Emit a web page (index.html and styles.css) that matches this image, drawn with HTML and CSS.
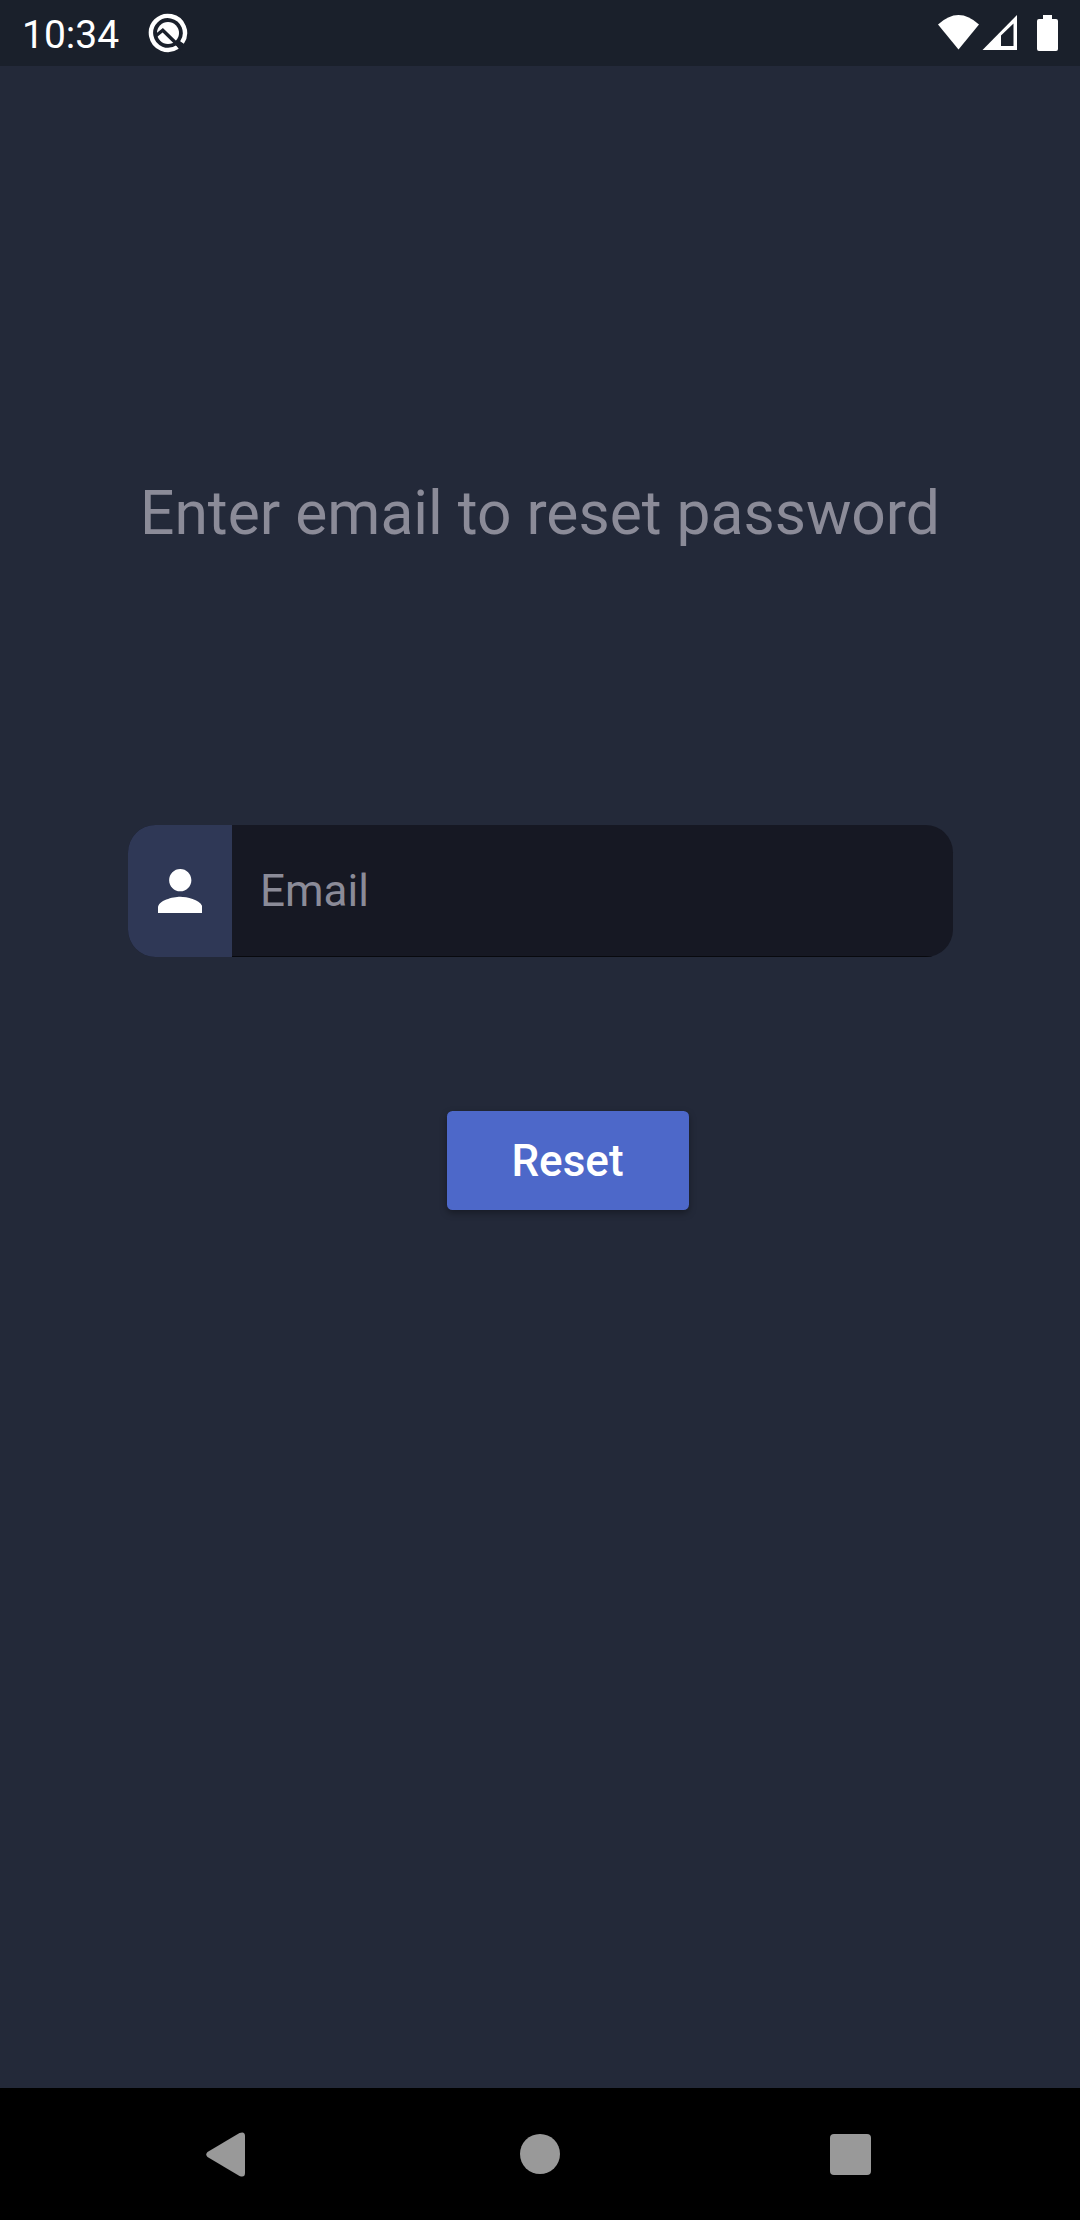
FILE: index.html
```html
<!DOCTYPE html>
<html lang="en">
<head>
<meta charset="utf-8">
<title>Reset password</title>
<link rel="stylesheet" href="styles.css">
</head>
<body>
<div class="screen">
  <header class="status-bar">
    <span class="clock">10:34</span>
    <svg class="notification" viewBox="0 0 40 40">
      <path d="M29.500 34A17 17 0 1 1 34 29.500" fill="none" stroke="#fff" stroke-width="4.4"/>
      <circle cx="20" cy="20" r="11" fill="#fff"/>
      <path d="M7 23.500L14.800 17.200L34 36" fill="none" stroke="#1a202b" stroke-width="3.4"/>
    </svg>
    <svg class="indicators" viewBox="0 0 122 37">
      <path d="M0 9.500Q20.500 -9.500 41 9.500L20.500 34.500Z" fill="#fff"/>
      <path d="M44.500 35L79 0V35Z" fill="#fff"/>
      <path d="M63 20.500L75.500 8.500V31H63Z" fill="#1a202b"/>
      <path d="M105 0h9v4h4a2 2 0 0 1 2 2v28a2 2 0 0 1-2 2h-17a2 2 0 0 1-2-2V6a2 2 0 0 1 2-2h4z" fill="#fff"/>
    </svg>
  </header>
  <main class="content">
    <h1 class="title">Enter email to reset password</h1>
    <label class="field">
      <span class="field-icon">
        <svg class="person" viewBox="4 4 16 16"><path d="M12 12c2.210 0 4-1.790 4-4s-1.790-4-4-4-4 1.790-4 4 1.790 4 4 4zm0 2c-2.670 0-8 1.340-8 4v2h16v-2c0-2.660-5.330-4-8-4z" fill="#fff"/></svg>
      </span>
      <input class="field-input" type="text" placeholder="Email">
    </label>
    <button class="reset" type="button">Reset</button>
  </main>
  <nav class="nav-bar">
    <svg class="back" viewBox="0 0 39 45"><path d="M1.500 20L33.500 1Q39 -1 39 4V41Q39 46 33.500 44L1.500 25Q-1 22.500 1.500 20Z" fill="#999"/></svg>
    <span class="home"></span>
    <span class="recents"></span>
  </nav>
</div>
</body>
</html>
```
FILE: styles.css
```css
* {
  box-sizing: border-box;
}

body {
  margin: 0;
  font-family: Roboto, sans-serif;
}

.screen {
  display: flex;
  flex-direction: column;
  width: 1080px;
  height: 2220px;
  background: #232939;
}

.status-bar {
  display: flex;
  align-items: flex-start;
  height: 66px;
  padding: 0 20px 0 22px;
  background: #1a202b;
  color: #fff;
}

.clock {
  width: 126px;
  font-size: 39px;
  line-height: 70px;
}

.notification {
  width: 40px;
  height: 40px;
  margin-top: 13px;
}

.indicators {
  width: 122px;
  height: 37px;
  margin: 15px 0 0 auto;
}

.content {
  display: flex;
  flex: 1;
  flex-direction: column;
  align-items: flex-start;
}

.title {
  width: 1080px;
  margin: 412px 0 0;
  color: #8b8b98;
  font-size: 60.5px;
  font-weight: 400;
  line-height: 72px;
  text-align: center;
  white-space: nowrap;
}

.field {
  display: flex;
  width: 825px;
  height: 132px;
  margin: 275px 0 0 127.5px;
  overflow: hidden;
  border-radius: 27.5px;
  background: #161823;
}

.field-icon {
  display: flex;
  align-items: center;
  justify-content: center;
  width: 104.5px;
  background: #2f3856;
}

.person {
  width: 44.5px;
  height: 44.5px;
}

.field-input {
  flex: 1;
  min-width: 0;
  padding: 0 28px;
  border: 0;
  border-bottom: 1px solid #08090e;
  outline: 0;
  background: transparent;
  color: #fff;
  font: 400 44px Roboto, sans-serif;
}

.field-input::placeholder {
  color: #8b8b98;
  opacity: 1;
}

.reset {
  width: 242px;
  height: 99px;
  margin: 154px 0 0 446.5px;
  padding: 2px 0 0;
  border: 0;
  border-radius: 5.5px;
  background: #4d68c9;
  box-shadow: 0 3px 7px rgba(0, 0, 0, 0.35);
  color: #fff;
  font: 500 44px/97px Roboto, sans-serif;
}

.nav-bar {
  display: flex;
  align-items: flex-start;
  height: 132px;
  padding: 44px 0 0 206px;
  background: #000;
}

.back {
  width: 39px;
  height: 45px;
}

.home {
  width: 40px;
  height: 40px;
  margin: 2px 0 0 275px;
  border-radius: 50%;
  background: #999;
}

.recents {
  width: 41px;
  height: 41px;
  margin: 2px 0 0 270px;
  border-radius: 4px;
  background: #999;
}
```
